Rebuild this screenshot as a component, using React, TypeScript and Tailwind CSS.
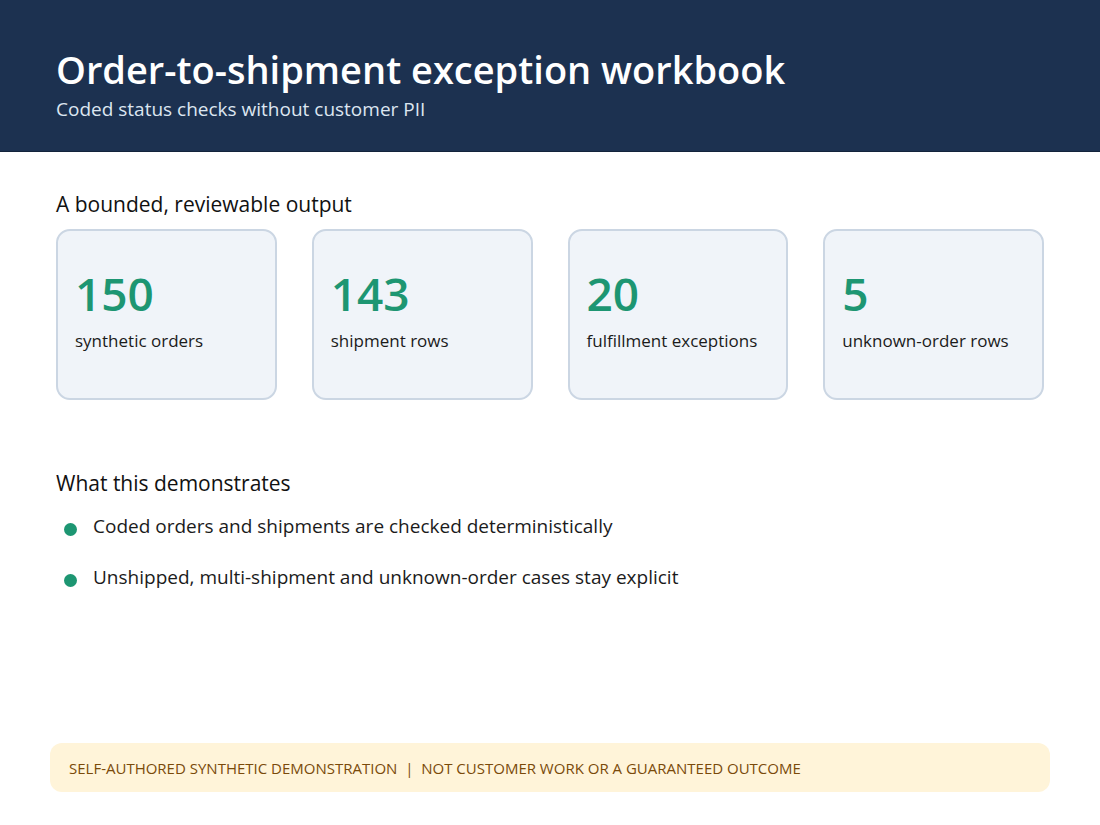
import React from 'react';

const stats = [
  { value: 150, label: 'synthetic orders' },
  { value: 143, label: 'shipment rows' },
  { value: 20, label: 'fulfillment exceptions' },
  { value: 5, label: 'unknown-order rows' },
];

const points = [
  'Coded orders and shipments are checked deterministically',
  'Unshipped, multi-shipment and unknown-order cases stay explicit',
];

function StatCard({ value, label }: { value: number; label: string }) {
  return (
    <li className="h-[171px] rounded-[14px] border-2 border-[#cbd6e3] bg-[#f0f4f9] px-[17px] pt-[34px]">
      <p className="text-[46px] font-semibold leading-[56px] text-[#1d9672]">{value}</p>
      <p className="mt-[8px] text-[17px] leading-[24px] text-[#1b1b1b]">{label}</p>
    </li>
  );
}

export default function App() {
  return (
    <div className="flex h-[825px] w-[1100px] flex-col bg-white font-['Open_Sans',sans-serif]">
      <header className="h-[152px] border-b border-[#13233b] bg-[#1c3150] px-[56px] pt-[44px]">
        <h1 className="text-[38px] font-semibold leading-[50px] text-white">
          Order-to-shipment exception workbook
        </h1>
        <p className="mt-[2px] text-[19px] leading-[26px] text-[#dce6f1]">
          Coded status checks without customer PII
        </p>
      </header>

      <main className="flex flex-1 flex-col px-[56px] pt-[37px]">
        <h2 className="text-[21px] font-medium leading-[30px] text-[#111]">A bounded, reviewable output</h2>
        <ul className="mt-[10px] grid grid-cols-4 gap-[35px]">
          {stats.map((s) => (
            <StatCard key={s.label} value={s.value} label={s.label} />
          ))}
        </ul>

        <h2 className="mt-[68px] text-[21px] font-medium leading-[30px] text-[#111]">What this demonstrates</h2>
        <ul className="mt-[14px] flex flex-col gap-[23px]">
          {points.map((p) => (
            <li key={p} className="flex items-center gap-[16px] pl-[8px] text-[19px] leading-[28px] text-[#1b1b1b]">
              <span className="mt-[6px] h-[13px] w-[13px] shrink-0 rounded-full bg-[#1d9672]" />
              {p}
            </li>
          ))}
        </ul>
      </main>

      <footer className="mx-[50px] mb-[33px] flex h-[49px] items-center rounded-[12px] bg-[#fff4d9] px-[19px]">
        <p className="text-[15px] font-medium uppercase leading-[20px] text-[#7a4a0a]">
          Self-authored synthetic demonstration&nbsp; |&nbsp; Not customer work or a guaranteed outcome
        </p>
      </footer>
    </div>
  );
}
